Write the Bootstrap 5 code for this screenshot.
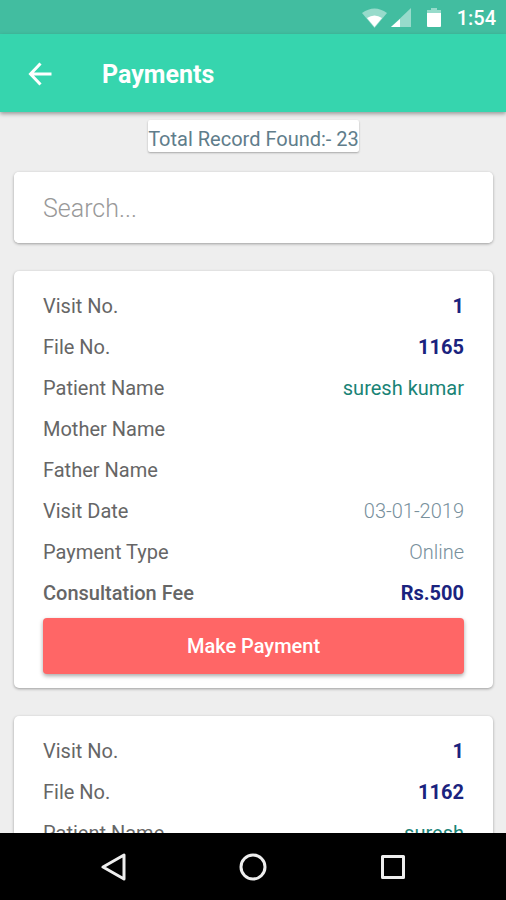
<!DOCTYPE html>
<html lang="en">
<head>
<meta charset="utf-8">
<meta name="viewport" content="width=device-width, initial-scale=1">
<title>Payments</title>
<link href="https://cdn.jsdelivr.net/npm/bootstrap@5.3.0/dist/css/bootstrap.min.css" rel="stylesheet">
<style>
body { font-family: Roboto, "Liberation Sans", sans-serif; background: #eee; color: #666; font-size: 20px; line-height: 24px; }
.status-bar { background: #42bda0; height: 34px; padding: 2px 10px 0; }
.status-bar time { font-weight: 500; font-size: 20px; }
.app-bar { background: #36d5ae; height: 78px; padding: 4px 26px 0; box-shadow: 0 2px 4px rgba(0,0,0,.35); z-index: 1; }
.app-bar h1 { font-size: 25px; font-weight: 700; margin-left: 48px; }
.screen { padding: 8px 13px 0 14px; scrollbar-width: none; }
.total { background: #fff; color: #607d8b; height: 32px; padding: 7px 0 0; border-radius: 2px; box-shadow: 0 1px 2px rgba(0,0,0,.3); }
.panel { background: #fff; border-radius: 5px; box-shadow: 0 1px 3px rgba(0,0,0,.35); }
.search-box { margin: 20px 0 28px; }
.search-box input { height: 71px; padding: 2px 29px 0; font-size: 25px; font-weight: 300; border-radius: 5px; }
.search-box input::placeholder { color: #999; }
.visit { padding: 14px 29px; margin-bottom: 28px; }
.visit dl > div { height: 41px; }
.visit dt { font-weight: 400; }
.visit dt.fee { font-weight: 500; }
.visit dd.num { color: #1a237e; font-weight: 700; }
.visit dd.person { color: #198376; }
.visit dd.detail { color: #78909c; font-weight: 300; }
.btn-pay, .btn-pay:hover { background: #ff6666; color: #fff; height: 56px; margin-top: 5px; border: 0; border-radius: 4px; font-size: 20px; font-weight: 500; box-shadow: 0 2px 4px rgba(0,0,0,.35); }
.sys-nav { background: #000; height: 67px; padding: 0 43px; z-index: 1; }
.sys-nav button { width: 141px; }
</style>
</head>
<body>
<div class="vh-100 d-flex flex-column overflow-hidden">
  <div class="status-bar d-flex align-items-center justify-content-end text-white flex-shrink-0">
    <svg width="25" height="20" viewBox="0 0 25 20" aria-hidden="true"><path d="M0 5Q12.500-4 25 5L12.500 20z" fill="#fff" opacity=".45"/><path d="M5 10Q12.500 5 20 10L12.500 19z" fill="#fff"/></svg>
    <svg class="ms-1" width="20" height="20" viewBox="0 0 20 20" aria-hidden="true"><path d="M20 0v19H0z" fill="#fff" opacity=".45"/><path d="M9 11v8H0z" fill="#fff"/></svg>
    <svg class="ms-3" width="14" height="20" viewBox="0 0 14 20" aria-hidden="true"><path d="M0 5V2h4V0h6v2h4v3z" fill="#fff" opacity=".45"/><path d="M0 5h14v13q0 1-1 1H1q-1 0-1-1z" fill="#fff"/></svg>
    <time class="ms-3">1:54</time>
  </div>
  <header class="app-bar d-flex align-items-center text-white position-relative flex-shrink-0">
    <button type="button" class="btn p-0 border-0 text-white lh-1" aria-label="Back">
      <svg class="d-block" width="28" height="26" viewBox="0 0 28 26" fill="none" stroke="currentColor" stroke-width="3"><path d="M25.500 12H4.500M14.500 1.500L4.500 12L14.500 22.500"/></svg>
    </button>
    <h1 class="mb-0">Payments</h1>
  </header>
  <main class="screen flex-grow-1 overflow-auto">
    <div class="d-flex justify-content-center"><div class="total">Total Record Found:- 23</div></div>
    <div class="search-box panel"><input type="text" class="form-control border-0" placeholder="Search..." aria-label="Search"></div>
    <section class="visit panel">
      <dl class="mb-0">
        <div class="d-flex align-items-center justify-content-between"><dt>Visit No.</dt><dd class="num mb-0">1</dd></div>
        <div class="d-flex align-items-center justify-content-between"><dt>File No.</dt><dd class="num mb-0">1165</dd></div>
        <div class="d-flex align-items-center justify-content-between"><dt>Patient Name</dt><dd class="person mb-0">suresh kumar</dd></div>
        <div class="d-flex align-items-center justify-content-between"><dt>Mother Name</dt><dd class="mb-0"></dd></div>
        <div class="d-flex align-items-center justify-content-between"><dt>Father Name</dt><dd class="mb-0"></dd></div>
        <div class="d-flex align-items-center justify-content-between"><dt>Visit Date</dt><dd class="detail mb-0">03-01-2019</dd></div>
        <div class="d-flex align-items-center justify-content-between"><dt>Payment Type</dt><dd class="detail mb-0">Online</dd></div>
        <div class="d-flex align-items-center justify-content-between"><dt class="fee">Consultation Fee</dt><dd class="num mb-0">Rs.500</dd></div>
      </dl>
      <button type="button" class="btn btn-pay w-100">Make Payment</button>
    </section>
    <section class="visit panel">
      <dl class="mb-0">
        <div class="d-flex align-items-center justify-content-between"><dt>Visit No.</dt><dd class="num mb-0">1</dd></div>
        <div class="d-flex align-items-center justify-content-between"><dt>File No.</dt><dd class="num mb-0">1162</dd></div>
        <div class="d-flex align-items-center justify-content-between"><dt>Patient Name</dt><dd class="person mb-0">suresh</dd></div>
      </dl>
    </section>
  </main>
  <nav class="sys-nav d-flex justify-content-center align-items-center position-relative flex-shrink-0" aria-label="System">
    <button type="button" class="btn p-0 border-0" aria-label="Back"><svg width="28" height="28" viewBox="0 0 28 28" fill="none" stroke="#eee" stroke-width="3" stroke-linejoin="round"><path d="M25 2v24L4 14z"/></svg></button>
    <button type="button" class="btn p-0 border-0" aria-label="Home"><svg width="28" height="28" viewBox="0 0 28 28" fill="none" stroke="#eee" stroke-width="3"><circle cx="14" cy="14" r="12"/></svg></button>
    <button type="button" class="btn p-0 border-0" aria-label="Recent apps"><svg width="28" height="28" viewBox="0 0 28 28" fill="none" stroke="#eee" stroke-width="3" stroke-linejoin="round"><path d="M3.500 3.500h21v21h-21z"/></svg></button>
  </nav>
</div>
<script src="https://cdn.jsdelivr.net/npm/bootstrap@5.3.0/dist/js/bootstrap.bundle.min.js"></script>
</body>
</html>
